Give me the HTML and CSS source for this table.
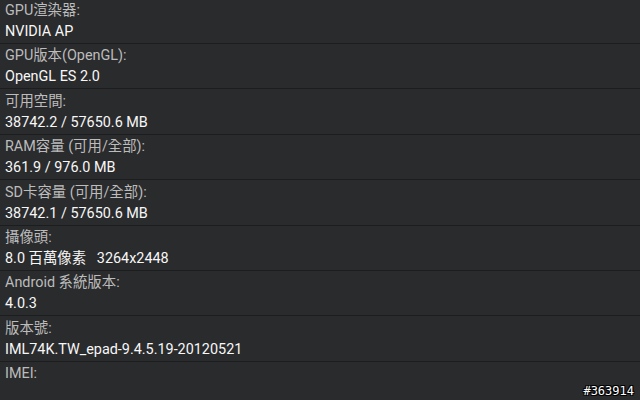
FILE: index.html
```
<!DOCTYPE html>
<html>
<head>
<meta charset="utf-8">
<link rel="stylesheet" href="styles.css">
</head>
<body>
<div class="screen">
  <ul class="info-list">
    <li class="info-row"><div class="label">GPU渲染器:</div><div class="value">NVIDIA AP</div></li>
    <li class="info-row"><div class="label">GPU版本(OpenGL):</div><div class="value">OpenGL ES 2.0</div></li>
    <li class="info-row"><div class="label">可用空間:</div><div class="value">38742.2 / 57650.6 MB</div></li>
    <li class="info-row"><div class="label">RAM容量 (可用/全部):</div><div class="value">361.9 / 976.0 MB</div></li>
    <li class="info-row"><div class="label">SD卡容量 (可用/全部):</div><div class="value">38742.1 / 57650.6 MB</div></li>
    <li class="info-row"><div class="label">攝像頭:</div><div class="value">8.0 百萬像素&nbsp;&nbsp; 3264x2448</div></li>
    <li class="info-row"><div class="label">Android 系統版本:</div><div class="value">4.0.3</div></li>
    <li class="info-row"><div class="label">版本號:</div><div class="value">IML74K.TW_epad-9.4.5.19-20120521</div></li>
    <li class="info-row"><div class="label">IMEI:</div><div class="value"></div></li>
  </ul>
  <div class="watermark">#363914</div>
</div>
</body>
</html>
```
FILE: styles.css
```
html, body {
  margin: 0;
  padding: 0;
  background: #2a2b2d;
}
.screen {
  position: relative;
  width: 640px;
  height: 400px;
  overflow: hidden;
  background: #2a2b2d;
  font-family: Roboto, "Noto Sans CJK TC", sans-serif;
}
.info-list {
  list-style: none;
  margin: -1.4px 0 0 0;
  padding: 0;
}
.info-row {
  box-sizing: border-box;
  height: 45.4px;
  padding: 2.4px 5px 0 5px;
  border-bottom: 1px solid #1c1d1e;
}
.label {
  font-size: 14.4px;
  line-height: 20px;
  color: #bcbcbc;
}
.value {
  margin-top: 1px;
  font-size: 14.4px;
  line-height: 20px;
  color: #f7f7f7;
  min-height: 20px;
}
.watermark {
  position: absolute;
  right: 6px;
  bottom: 2px;
  font-family: "DejaVu Sans Mono", monospace;
  font-size: 12px;
  line-height: 14px;
  color: #ffffff;
  text-shadow: 1px 1px 0 #000, -1px -1px 0 #000, 1px -1px 0 #000, -1px 1px 0 #000;
}
```
